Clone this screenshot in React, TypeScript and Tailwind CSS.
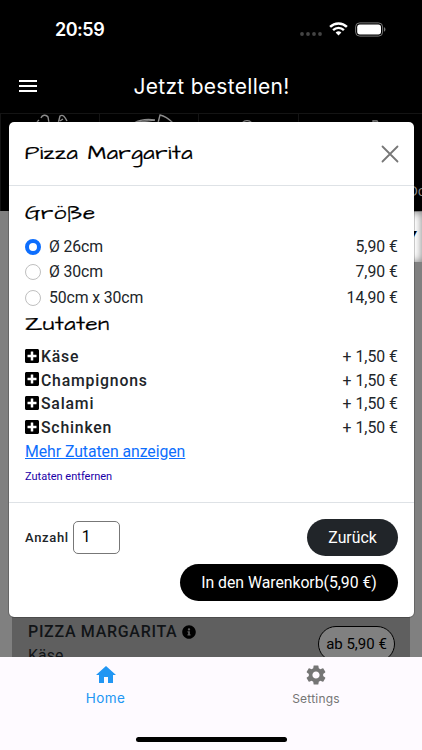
import { useState } from "react";
import { FaInfoCircle, FaPlusSquare } from "react-icons/fa";
import { MdHome, MdMenu, MdSettings } from "react-icons/md";

interface Size {
  label: string;
  price: string;
}

const SIZES: Size[] = [
  { label: "Ø 26cm", price: "5,90 €" },
  { label: "Ø 30cm", price: "7,90 €" },
  { label: "50cm x 30cm", price: "14,90 €" },
];

const INGREDIENTS = ["Käse", "Champignons", "Salami", "Schinken"];

function StatusBar() {
  return (
    <div className="flex h-[57px] shrink-0 items-center bg-black pl-[55px] pr-[36px] pt-px text-white">
      <span className="pt-px font-['Inter',sans-serif] text-[18px] font-semibold leading-none tracking-[-0.5px]">
        20:59
      </span>
      <div className="ml-auto flex items-center">
        <svg width="22" height="4" viewBox="0 0 22 4" className="mt-[9px]" fill="#444">
          <circle cx="2" cy="2" r="1.9" />
          <circle cx="8" cy="2" r="1.9" />
          <circle cx="14" cy="2" r="1.9" />
          <circle cx="20" cy="2" r="1.9" />
        </svg>
        <svg width="19" height="14" viewBox="0 0 19 14" className="ml-[7px]" fill="none" stroke="#fff">
          <path d="M1.1 4.9a12 12 0 0 1 16.8 0" strokeWidth="2.5" />
          <path d="M4.1 8.1a7.7 7.7 0 0 1 10.8 0" strokeWidth="2.4" />
          <path d="M6.6 10.6a4.1 4.1 0 0 1 5.8 0L9.5 13.6z" fill="#fff" stroke="none" />
        </svg>
        <svg width="31" height="15" viewBox="0 0 31 15" className="ml-[7px]">
          <rect x="0.6" y="0.9" width="27" height="13.2" rx="4" fill="none" stroke="#777" />
          <rect x="2.2" y="2.5" width="23.8" height="10" rx="2.7" fill="#fff" />
          <path d="M29 5.3c1.9.6 1.9 3.8 0 4.4z" fill="#777" />
        </svg>
      </div>
    </div>
  );
}

function AppBar() {
  return (
    <div className="grid h-[56px] shrink-0 grid-cols-[56px_1fr_56px] items-center bg-black text-white">
      <MdMenu className="ml-[16px] mt-px size-[24px]" />
      <span className="pl-px pt-[3px] text-center font-['Inter',sans-serif] text-[21px] leading-none tracking-[0.3px]">
        Jetzt bestellen!
      </span>
    </div>
  );
}

function CategoryTiles() {
  return (
    <div className="grid h-[98px] w-[496px] shrink-0 grid-cols-5 bg-black text-[#8c8c8c]">
      <div className="border-l border-t border-[#141414]">
        <svg width="98" height="40" fill="none" stroke="currentColor" strokeWidth="1.4">
          <path d="M36 8l2-2M40 4c1-3 5-4 7-1l1 6M57 10l2-8c3-2 5 1 7 5M59 7l3-2" />
        </svg>
      </div>
      <div className="border-l border-t border-[#141414]">
        <svg width="98" height="40" fill="none" stroke="currentColor" strokeWidth="1.4">
          <path d="M34 9c7-4 14-4 21-3M58 9l2-8c5 1 9 4 13 8M36 8c6 0 12-1 19-2" />
        </svg>
      </div>
      <div className="border-l border-t border-[#141414]">
        <svg width="98" height="40" fill="none" stroke="currentColor" strokeWidth="1.4">
          <path d="M43 9c3-3 7-3 10 0" />
        </svg>
      </div>
      <div className="border-l border-t border-[#141414]">
        <svg width="98" height="40" fill="none" stroke="currentColor" strokeWidth="1.4">
          <path d="M74 10V7h4l2 3" />
        </svg>
      </div>
      <div className="border-t border-[#141414] pl-[11px] pt-[68px] font-['Open_Sans',sans-serif] text-[14px] leading-[18px] tracking-[-0.3px]">
        Do
      </div>
    </div>
  );
}

function Shop() {
  return (
    <div className="flex min-h-0 flex-1 flex-col overflow-hidden bg-[#808080]">
      <CategoryTiles />
      <div className="ml-[20px] mt-px flex h-[50px] shrink-0 items-center justify-end bg-white pb-[4px] pr-[6px] font-['Open_Sans',sans-serif] text-[20px] font-bold italic text-black shadow-[inset_0_0_8px_#777]">
        y
      </div>
      <div className="mx-[12px] mt-[342px] flex h-[80px] shrink-0 items-start justify-between bg-[#5f5f5f] pl-[16px] pr-[15px] text-[#111417]">
        <div className="pt-[16px]">
          <div className="flex items-center text-[16px] font-medium leading-[24px] tracking-[0.69px]">
            PIZZA MARGARITA
            <FaInfoCircle className="ml-[5px] size-[14px] text-black" />
          </div>
          <div className="text-[15.8px] leading-[24px] tracking-[0.1px]">Käse</div>
        </div>
        <div className="mt-[22px] flex h-[36px] w-[77px] items-center justify-center rounded-full border border-black bg-[#808080] text-[15px] text-black">
          ab 5,90 €
        </div>
      </div>
    </div>
  );
}

function Heading({ text }: { text: string }) {
  return (
    <h4 className="origin-left scale-x-[1.14] whitespace-nowrap font-['Architects_Daughter','Open_Sans',sans-serif] text-[19.5px] font-medium leading-[28px] tracking-[0.45px] text-black [-webkit-text-stroke:0.2px_black]">
      {text}
    </h4>
  );
}

function OrderDialog() {
  const [selected, setSelected] = useState(0);
  const [amount, setAmount] = useState("1");

  return (
    <div className="absolute left-[9px] top-[122px] flex h-[495px] w-[405px] flex-col rounded-[5px] bg-white text-[15.8px] text-[#212529] outline outline-black/20">
      <div className="flex h-[64px] shrink-0 items-center justify-between border-b border-[#dee2e6] pl-[16px] pr-[15px]">
        <Heading text="Pizza Margarita" />
        <button aria-label="Schließen">
          <svg width="18" height="18" viewBox="0 0 18 18" stroke="#777" strokeWidth="1.8" strokeLinecap="round">
            <path d="M1.5 1.5l15 15M16.5 1.5l-15 15" />
          </svg>
        </button>
      </div>

      <div className="flex-1 px-[16px] pt-[14px]">
        <Heading text="Größe" />
        <div className="pt-[6px]">
          {SIZES.map((size, i) => (
            <label key={size.label} className="flex h-[25.5px] items-center">
              <input
                type="radio"
                name="size"
                checked={selected === i}
                onChange={() => setSelected(i)}
                className="size-[16px] appearance-none rounded-full border border-[#bfbfbf] bg-white checked:border-[4.5px] checked:border-[#0d6efd]"
              />
              <span className="ml-[8px] tracking-[-0.12px]">{size.label}</span>
              <span className="ml-auto">{size.price}</span>
            </label>
          ))}
        </div>
        <Heading text="Zutaten" />
        <div className="pt-[6.5px]">
          {INGREDIENTS.map((name) => (
            <div key={name} className="flex h-[23.65px] items-center">
              <FaPlusSquare className="h-[16px] w-[14px] -translate-y-px text-black" />
              <span className="ml-[2px] font-medium tracking-[0.8px]">{name}</span>
              <span className="ml-auto">+ 1,50 €</span>
            </div>
          ))}
        </div>
        <a className="block leading-[24px] tracking-[-0.05px] text-[#0d6efd] underline">Mehr Zutaten anzeigen</a>
        <a className="mt-[5px] block text-[11px] leading-[16px] text-[#1a00a8]">Zutaten entfernen</a>
      </div>

      <div className="h-[115px] shrink-0 border-t border-[#dee2e6] px-[16px] pt-[16px]">
        <div className="flex h-[37px] items-center">
          <span className="text-[13px] font-medium tracking-[0.65px]">Anzahl</span>
          <input
            value={amount}
            onChange={(e) => setAmount(e.target.value)}
            className="ml-[4px] h-[33px] w-[47px] rounded-[5px] border border-[#777] bg-white pb-[2px] pl-[8px] text-black"
          />
          <button className="ml-auto h-[37px] w-[91px] rounded-full bg-[#212529] text-white">Zurück</button>
        </div>
        <button className="ml-auto mt-[8px] block h-[37px] w-[218px] rounded-full bg-black tracking-[-0.03px] text-white">
          In den Warenkorb(5,90 €)
        </button>
      </div>
    </div>
  );
}

function TabBar() {
  return (
    <div className="flex h-[93px] shrink-0 flex-col items-center bg-[#fefaff] font-['Inter',sans-serif]">
      <div className="grid w-full grid-cols-2">
        <div className="flex flex-col items-center pt-[6px] text-[#2196f3]">
          <MdHome className="size-[24px]" />
          <span className="mt-[2px] text-[13.5px] leading-[18px] tracking-[0.4px]">Home</span>
        </div>
        <div className="flex flex-col items-center pr-px pt-[6px] text-[#757575]">
          <MdSettings className="size-[24px]" />
          <span className="mt-[3px] text-[12px] leading-[18px] tracking-[0.2px]">Settings</span>
        </div>
      </div>
      <div className="mb-[8px] mt-auto h-[5px] w-[151px] rounded-full bg-black" />
    </div>
  );
}

export default function App() {
  return (
    <div className="relative flex h-[750px] w-[422px] flex-col overflow-hidden bg-black font-['Roboto',sans-serif]">
      <StatusBar />
      <AppBar />
      <Shop />
      <TabBar />
      <OrderDialog />
    </div>
  );
}
